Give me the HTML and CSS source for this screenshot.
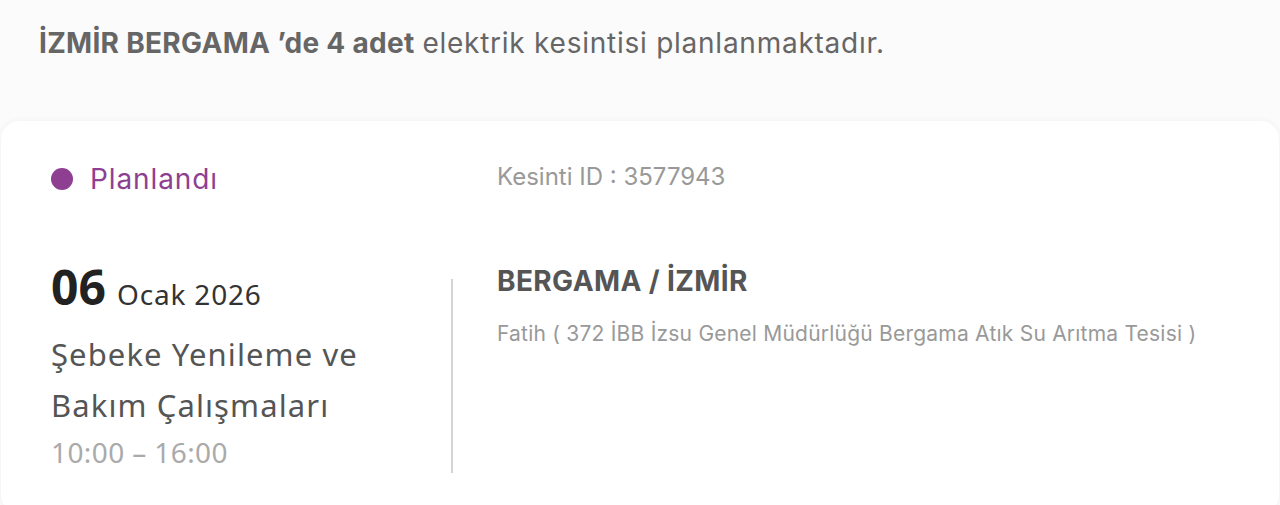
FILE: index.html
```html
<!DOCTYPE html>
<html lang="tr">
<head>
<meta charset="utf-8">
<link rel="stylesheet" href="styles.css">
</head>
<body>
<div class="page">
  <p class="summary"><strong>İZMİR BERGAMA ’de 4 adet</strong> <span class="rest">elektrik kesintisi planlanmaktadır.</span></p>
  <div class="card">
    <div class="status"><span class="dot"></span><span class="status-text">Planlandı</span></div>
    <div class="outage-id">Kesinti ID : 3577943</div>
    <div class="when">
      <div class="date"><span class="day">06</span> <span class="month">Ocak 2026</span></div>
      <div class="reason">Şebeke Yenileme ve Bakım Çalışmaları</div>
      <div class="time">10:00 – 16:00</div>
    </div>
    <div class="where">
      <div class="place">BERGAMA / İZMİR</div>
      <div class="detail">Fatih ( 372 İBB İzsu Genel Müdürlüğü Bergama Atık Su Arıtma Tesisi )</div>
    </div>
  </div>
</div>
</body>
</html>
```

FILE: styles.css
```css
* { box-sizing: border-box; }
html, body { margin: 0; padding: 0; }
body {
  background: #fbfbfb;
  font-family: Inter, "Liberation Sans", sans-serif;
  height: 505px;
  overflow: hidden;
}
.page { padding: 0 1px; }
.summary {
  margin: 0;
  padding: 26px 0 0 38px;
  height: 121px;
  font-size: 28px;
  color: #666;
}
.summary strong { font-weight: 700; letter-spacing: 0.3px; }
.summary .rest { letter-spacing: 0.75px; }
.card {
  background: #fff;
  border-radius: 18px;
  box-shadow: 0 0 6px rgba(0,0,0,0.05);
  display: grid;
  grid-template-columns: 400px 1fr;
  grid-template-rows: auto auto;
  padding: 36px 0 40px 50px;
}
.status { display: flex; align-items: center; gap: 17px; height: 44px; }
.dot { width: 22px; height: 22px; border-radius: 50%; background: #8e3f92; }
.status-text { font-size: 28px; color: #8e3f92; letter-spacing: 0.9px; }
.outage-id { padding-left: 46px; font-size: 24px; color: #999; line-height: 40px; }
.when {
  margin-top: 62px;
  padding-right: 20px;
  font-family: "Noto Sans", sans-serif;
}
.date { line-height: 48px; color: #222; }
.day { font-size: 48px; font-weight: 700; }
.month { font-size: 28px; color: #333; letter-spacing: 0.8px; margin-left: 7px; }
.reason { font-size: 31px; line-height: 51px; color: #555; margin-top: 6px; letter-spacing: 1.1px; }
.time { font-size: 28px; color: #aaa; line-height: 42px; letter-spacing: 0.4px; }
.where {
  margin-top: 78px;
  border-left: 2px solid #d4d4d4;
  padding-left: 44px;
}
.place { font-size: 28px; font-weight: 700; color: #555; line-height: 40px; margin-top: -18px; letter-spacing: 0.4px; }
.detail { font-size: 21px; color: #999; margin-top: 20px; letter-spacing: 0.22px; }
```
